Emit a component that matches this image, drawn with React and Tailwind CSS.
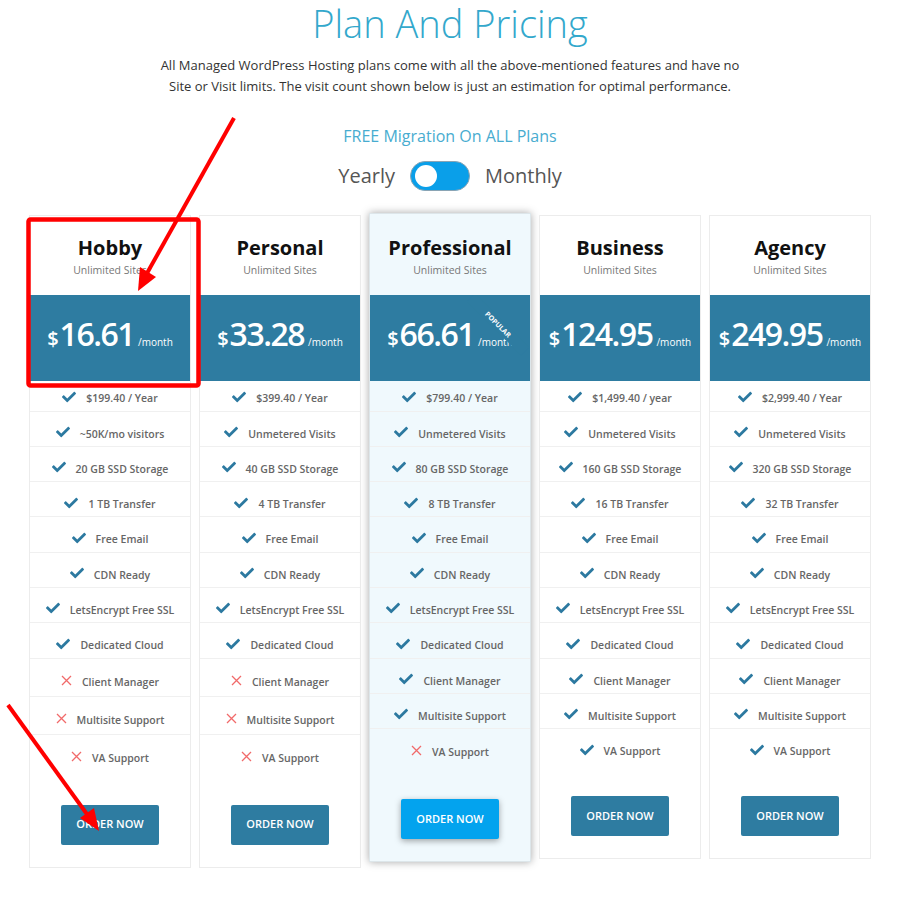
import { FaCheck } from 'react-icons/fa';

const PLANS = [
  {
    name: 'Hobby',
    price: '16.61',
    features: [
      ['$199.40 / Year', true],
      ['~50K/mo visitors', true],
      ['20 GB SSD Storage', true],
      ['1 TB Transfer', true],
      ['Free Email', true],
      ['CDN Ready', true],
      ['LetsEncrypt Free SSL', true],
      ['Dedicated Cloud', true],
      ['Client Manager', false],
      ['Multisite Support', false],
      ['VA Support', false],
    ],
  },
  {
    name: 'Personal',
    price: '33.28',
    features: [
      ['$399.40 / Year', true],
      ['Unmetered Visits', true],
      ['40 GB SSD Storage', true],
      ['4 TB Transfer', true],
      ['Free Email', true],
      ['CDN Ready', true],
      ['LetsEncrypt Free SSL', true],
      ['Dedicated Cloud', true],
      ['Client Manager', false],
      ['Multisite Support', false],
      ['VA Support', false],
    ],
  },
  {
    name: 'Professional',
    price: '66.61',
    popular: true,
    features: [
      ['$799.40 / Year', true],
      ['Unmetered Visits', true],
      ['80 GB SSD Storage', true],
      ['8 TB Transfer', true],
      ['Free Email', true],
      ['CDN Ready', true],
      ['LetsEncrypt Free SSL', true],
      ['Dedicated Cloud', true],
      ['Client Manager', true],
      ['Multisite Support', true],
      ['VA Support', false],
    ],
  },
  {
    name: 'Business',
    price: '124.95',
    features: [
      ['$1,499.40 / year', true],
      ['Unmetered Visits', true],
      ['160 GB SSD Storage', true],
      ['16 TB Transfer', true],
      ['Free Email', true],
      ['CDN Ready', true],
      ['LetsEncrypt Free SSL', true],
      ['Dedicated Cloud', true],
      ['Client Manager', true],
      ['Multisite Support', true],
      ['VA Support', true],
    ],
  },
  {
    name: 'Agency',
    price: '249.95',
    features: [
      ['$2,999.40 / Year', true],
      ['Unmetered Visits', true],
      ['320 GB SSD Storage', true],
      ['32 TB Transfer', true],
      ['Free Email', true],
      ['CDN Ready', true],
      ['LetsEncrypt Free SSL', true],
      ['Dedicated Cloud', true],
      ['Client Manager', true],
      ['Multisite Support', true],
      ['VA Support', true],
    ],
  },
];

const Cross = () => (
  <svg width="11" height="11" viewBox="0 0 11 11" className="shrink-0 -mt-[3px]">
    <path d="M1 1L10 10M10 1L1 10" stroke="#f16a6a" strokeWidth="1.3" />
  </svg>
);

const FeatureRow = ({ label, ok, first, last }) => {
  let pad = ok ? 'pt-[14px] pb-[4.3px]' : 'pt-[15px] pb-[6px]';
  if (first) pad = 'pt-[9px] pb-[4.5px]';
  return (
    <li className={`flex items-center justify-center gap-[10px] ${pad} ${last ? '' : 'border-b border-[#f0f0f0]'}`}>
      {ok ? <FaCheck className="shrink-0 -mt-[3px] text-[#2c79a0]" size={14} /> : <Cross />}
      <span className="text-[10.5px] leading-[16px] font-semibold text-[#666]">{label}</span>
    </li>
  );
};

const PlanCard = ({ plan }) => (
  <div
    className={`w-[162px] border flex flex-col ${
      plan.popular
        ? 'bg-[#f0f9fd] border-[#dde6ea] shadow-[0_0_8px_rgba(0,0,0,0.35)] -mt-[2px]'
        : 'bg-white border-[#ececec]'
    }`}
  >
    <div className={`${plan.popular ? 'h-[81px] pt-[21px]' : 'h-[79px] pt-[19px]'} text-center`}>
      <h3 className="text-[20px] leading-[26px] font-bold text-[#111]">{plan.name}</h3>
      <p className="text-[10.5px] leading-[16px] mt-[1px] text-[#777]">Unlimited Sites</p>
    </div>

    <div className="relative overflow-hidden h-[86px] bg-[#2e7ca1] flex items-center justify-center pb-[4px]">
      <div className="flex items-baseline text-white">
        <span className="text-[20px] font-semibold mr-[1px]">$</span>
        <span className="text-[32px] leading-none font-semibold tracking-[-1.5px]">{plan.price}</span>
        <span className="text-[10px] ml-[4px]">/month</span>
      </div>
      {plan.popular && (
        <span className="absolute left-[90px] top-[24px] w-[76px] h-[11px] rotate-45 bg-[#2e7ca1] text-white text-[7px] leading-[11px] font-bold text-center">
          POPULAR
        </span>
      )}
    </div>

    <ul>
      {plan.features.map(([label, ok], i) => (
        <FeatureRow key={label} label={label} ok={ok} first={i === 0} last={i === plan.features.length - 1} />
      ))}
    </ul>

    <div className="flex justify-center mt-[33px] pb-[22px]">
      <button
        className={`w-[98px] h-[40px] rounded-[2px] text-white text-[11px] font-semibold ${
          plan.popular ? 'bg-[#03a3ee] shadow-[0_2px_6px_rgba(0,0,0,0.35)]' : 'bg-[#2e7ca1]'
        }`}
      >
        ORDER NOW
      </button>
    </div>
  </div>
);

const Annotations = () => (
  <svg className="absolute inset-0 pointer-events-none" width="917" height="898" viewBox="0 0 917 898">
    <rect x="28.5" y="219.5" width="170" height="166" rx="2" fill="none" stroke="#ff0000" strokeWidth="4.5" />
    <line x1="234" y1="118" x2="146" y2="275" stroke="#ff0000" strokeWidth="4" />
    <polygon points="138,291 156,277 140,267" fill="#ff0000" />
    <line x1="8" y1="705" x2="89" y2="817" stroke="#ff0000" strokeWidth="4" />
    <polygon points="99,831 94,808 80,818" fill="#ff0000" />
  </svg>
);

export default function App() {
  return (
    <div className="relative w-[917px] h-[898px] bg-white overflow-hidden" style={{ fontFamily: '"Open Sans", sans-serif' }}>
      <div className="w-[900px] flex flex-col items-center pt-[3px]">
        <h1 className="text-[38px] leading-[40px] font-light text-[#33a8cc]">Plan And Pricing</h1>
        <p className="mt-[12px] text-[13px] leading-[21px] text-[#333] text-center">
          All Managed WordPress Hosting plans come with all the above-mentioned features and have no
          <br />
          Site or Visit limits. The visit count shown below is just an estimation for optimal performance.
        </p>

        <p className="mt-[27px] text-[16px] leading-[24px] text-[#48acd0]">FREE Migration On ALL Plans</p>

        <div className="mt-[13px] h-[30px] flex items-center gap-[15px] text-[20px] text-[#555]">
          <span>Yearly</span>
          <div className="w-[60px] h-[30px] rounded-full bg-[#0a9fe9] border border-[#8aa4b4] flex items-center px-[4px]">
            <span className="w-[22px] h-[22px] rounded-full bg-white" />
          </div>
          <span>Monthly</span>
        </div>

        <div className="mt-[24px] flex items-start gap-[8px]">
          {PLANS.map((plan) => (
            <PlanCard key={plan.name} plan={plan} />
          ))}
        </div>
      </div>
      <Annotations />
    </div>
  );
}
